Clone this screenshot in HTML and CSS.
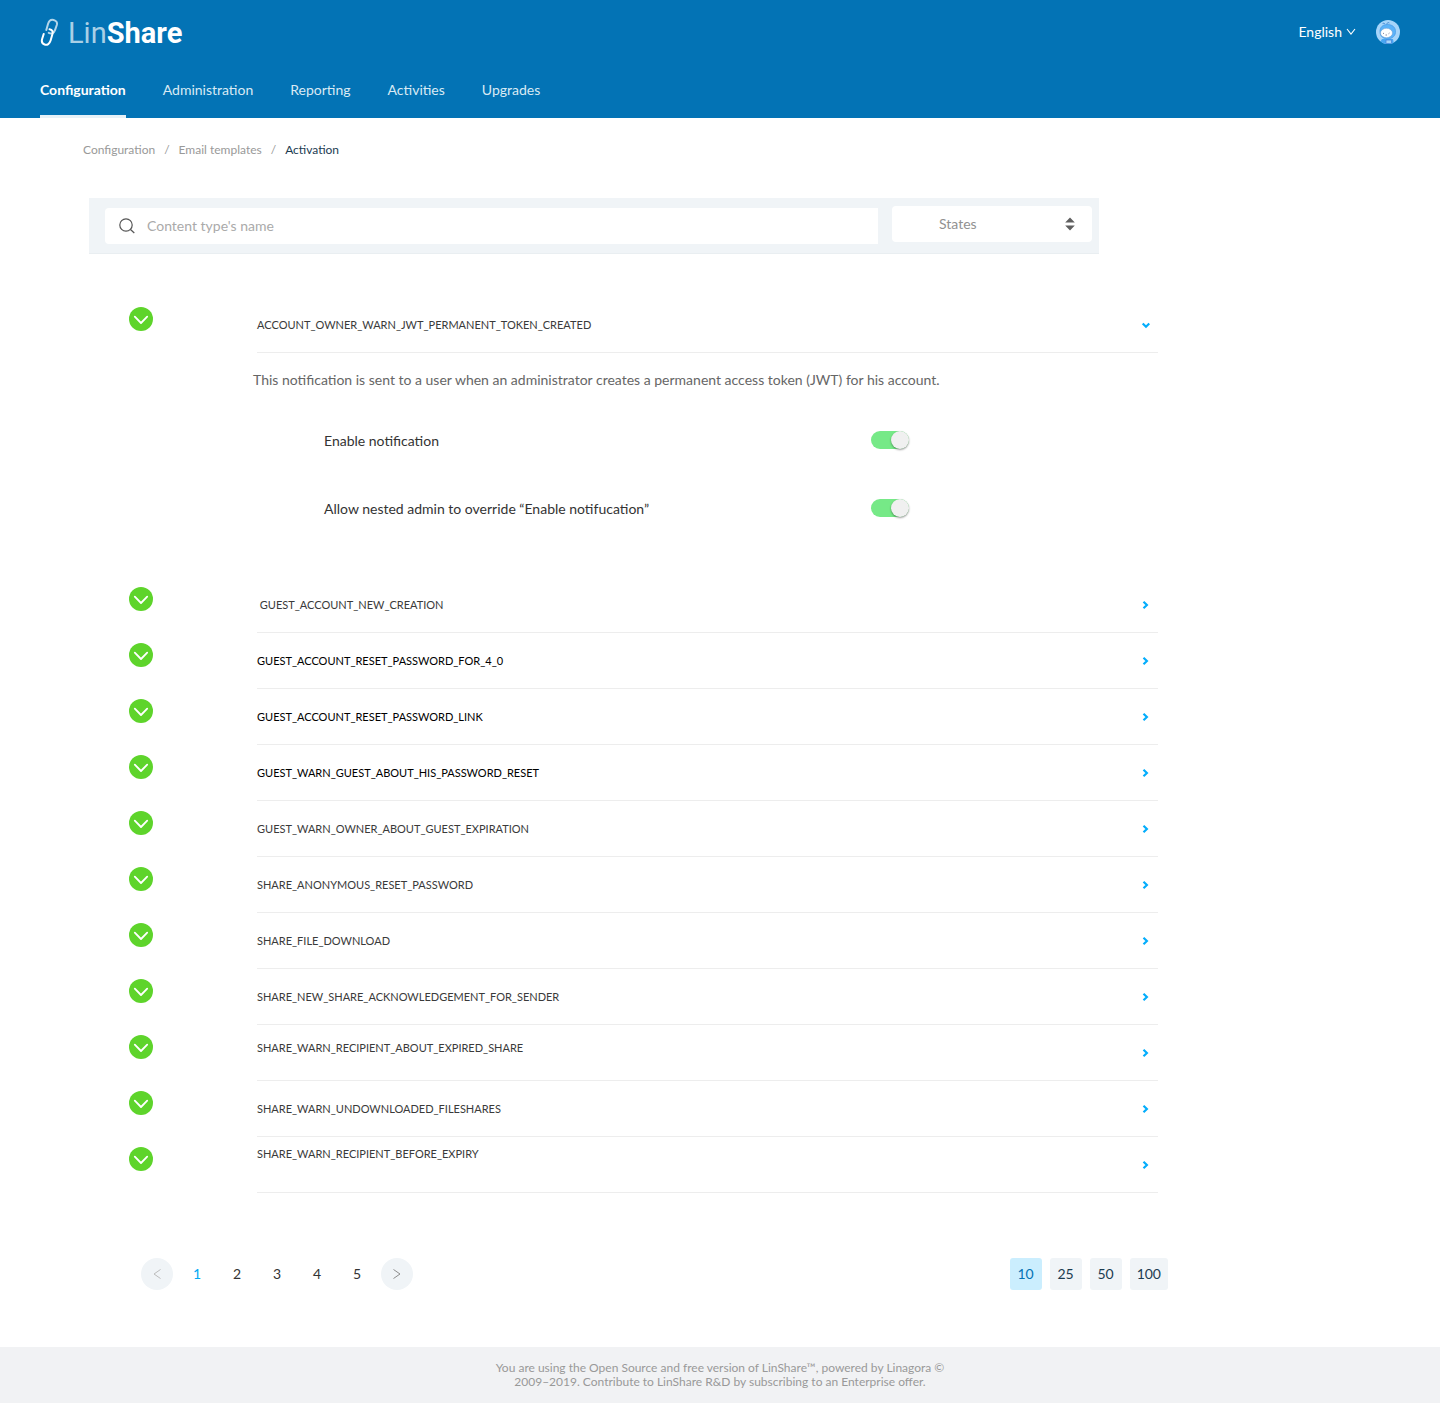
FILE: index.html
```html
<!DOCTYPE html>
<html lang="en">
<head>
<meta charset="utf-8">
<title>LinShare - Email templates activation</title>
<link rel="stylesheet" href="styles.css">
</head>
<body>
<svg class="sprite" aria-hidden="true">
  <symbol id="check" viewBox="0 0 24 24"><circle cx="12" cy="12" r="12" fill="#5ed42b"/><path d="M5.8 9.7l6.2 6.3 6.2-6.3" fill="none" stroke="#fff" stroke-width="1.8" stroke-linecap="round" stroke-linejoin="round"/></symbol>
  <symbol id="right" viewBox="0 0 10 10"><path d="M3.500 1.700L6.900 5 3.500 8.300" fill="none" stroke="#03adfc" stroke-width="2.200"/></symbol>
  <symbol id="down" viewBox="0 0 10 10"><path d="M2.700 3.500L6 6.800l3.300-3.300" fill="none" stroke="#03adfc" stroke-width="2.200"/></symbol>
</svg>
<header class="header">
  <div class="topbar">
    <a class="logo" href="#">
      <svg class="logo-mark" width="18" height="28" viewBox="0 0 18 28" fill="none" stroke-linecap="round" stroke-width="2"><path d="M6.300 12L8 6C9 2.800 11 1.400 13.600 2C16.300 2.700 17.500 4.500 16.800 7L15 12.200C14 15.200 11.500 16.300 8.800 14.800" stroke="#b4d6ea"/><path d="M9.500 11.200C12.500 11.600 13.200 13.800 12.400 16.300L10.600 22.500C9.600 25.800 7.300 27.400 4.600 26.500C2 25.600 1.400 23.300 2.200 20.700L3.700 16" stroke="#fff"/></svg>
      <span class="logo-text"><span class="logo-lin">Lin</span>Share</span>
    </a>
    <div class="account">
      <button class="language" type="button">English
        <svg width="10" height="8" viewBox="0 0 10 8"><path d="M1 1l4 5 4-5" fill="none" stroke="#fff" stroke-width="1.100"/></svg>
      </button>
      <button class="avatar" type="button" aria-label="Account">
        <svg width="24" height="24" viewBox="0 0 24 24"><defs><clipPath id="disc"><circle cx="12" cy="12" r="12"/></clipPath></defs><g clip-path="url(#disc)"><path d="M0 0h24v24H0z" fill="#a6d5fa"/><path d="M3 24l3-5h11l1 5z" fill="#48a6f3"/><path d="M4 12.500C3.500 7 7 4.500 11.500 4.500S20 7 19.500 12.500c-.3 4-4 6.500-8 6.500S4.300 16.500 4 12.500z" fill="#5cb3f8" stroke="#4a9be6" stroke-width=".7"/><path d="M6.500 4c.5-1 1.500-1 2.500 0M11 4.300c0-1.800 1-2 2.400-1.300" fill="none" stroke="#3c83cf" stroke-width=".9"/><ellipse cx="10.500" cy="13" rx="6" ry="4.700" fill="#fff" stroke="#6f9ad0" stroke-width=".5"/><path d="M7 13l1 .8M12.500 13.800l1-.8M9.500 15h1.500" stroke="#557" stroke-width=".7"/><path d="M10 20h5.500v3.500H10z" fill="#a6d5fa" stroke="#4a86dc" stroke-width=".8"/></g></svg>
      </button>
    </div>
  </div>
  <nav class="nav">
    <a class="active" href="#">Configuration</a>
    <a href="#">Administration</a>
    <a href="#">Reporting</a>
    <a href="#">Activities</a>
    <a href="#">Upgrades</a>
  </nav>
</header>
<main class="main">
  <nav class="breadcrumb" aria-label="Breadcrumb">
    <a href="#">Configuration</a><span>/</span><a href="#">Email templates</a><span>/</span><a class="current" href="#">Activation</a>
  </nav>
  <form class="filters">
    <label class="search">
      <svg width="16" height="16" viewBox="0 0 16 16" fill="none" stroke="#555" stroke-width="1.200"><circle cx="7" cy="7" r="6.200"/><path d="M11.500 11.500l3.800 3.500"/></svg>
      <input type="search" placeholder="Content type's name" aria-label="Content type's name">
    </label>
    <label class="states">
      <select aria-label="States"><option>States</option></select>
      <svg class="sort" width="10" height="14" viewBox="0 0 10 14" fill="#5f5f5f"><path d="M5 .500l4.800 5H.2zM5 13.500l4.800-5H.2z"/></svg>
    </label>
  </form>
  <ul class="templates">
    <li class="template">
      <svg class="status"><use href="#check"/></svg>
      <button class="row" type="button" aria-expanded="true"><span>ACCOUNT_OWNER_WARN_JWT_PERMANENT_TOKEN_CREATED</span><svg class="chevron"><use href="#down"/></svg></button>
      <div class="details">
        <p>This notification is sent to a user when an administrator creates a permanent access token (JWT) for his account.</p>
        <label class="option">Enable notification<input class="switch" type="checkbox" role="switch" checked></label>
        <label class="option">Allow nested admin to override “Enable notifucation”<input class="switch" type="checkbox" role="switch" checked></label>
      </div>
    </li>
    <li class="template"><svg class="status"><use href="#check"/></svg><button class="row" type="button"><span>&nbsp;GUEST_ACCOUNT_NEW_CREATION</span><svg class="chevron"><use href="#right"/></svg></button></li>
    <li class="template"><svg class="status"><use href="#check"/></svg><button class="row strong" type="button"><span>GUEST_ACCOUNT_RESET_PASSWORD_FOR_4_0</span><svg class="chevron"><use href="#right"/></svg></button></li>
    <li class="template"><svg class="status"><use href="#check"/></svg><button class="row strong" type="button"><span>GUEST_ACCOUNT_RESET_PASSWORD_LINK</span><svg class="chevron"><use href="#right"/></svg></button></li>
    <li class="template"><svg class="status"><use href="#check"/></svg><button class="row strong" type="button"><span>GUEST_WARN_GUEST_ABOUT_HIS_PASSWORD_RESET</span><svg class="chevron"><use href="#right"/></svg></button></li>
    <li class="template"><svg class="status"><use href="#check"/></svg><button class="row" type="button"><span>GUEST_WARN_OWNER_ABOUT_GUEST_EXPIRATION</span><svg class="chevron"><use href="#right"/></svg></button></li>
    <li class="template"><svg class="status"><use href="#check"/></svg><button class="row" type="button"><span>SHARE_ANONYMOUS_RESET_PASSWORD</span><svg class="chevron"><use href="#right"/></svg></button></li>
    <li class="template"><svg class="status"><use href="#check"/></svg><button class="row" type="button"><span>SHARE_FILE_DOWNLOAD</span><svg class="chevron"><use href="#right"/></svg></button></li>
    <li class="template"><svg class="status"><use href="#check"/></svg><button class="row" type="button"><span>SHARE_NEW_SHARE_ACKNOWLEDGEMENT_FOR_SENDER</span><svg class="chevron"><use href="#right"/></svg></button></li>
    <li class="template"><svg class="status"><use href="#check"/></svg><button class="row raised" type="button"><span>SHARE_WARN_RECIPIENT_ABOUT_EXPIRED_SHARE</span><svg class="chevron"><use href="#right"/></svg></button></li>
    <li class="template"><svg class="status"><use href="#check"/></svg><button class="row" type="button"><span>SHARE_WARN_UNDOWNLOADED_FILESHARES</span><svg class="chevron"><use href="#right"/></svg></button></li>
    <li class="template"><svg class="status"><use href="#check"/></svg><button class="row top" type="button"><span>SHARE_WARN_RECIPIENT_BEFORE_EXPIRY</span><svg class="chevron"><use href="#right"/></svg></button></li>
  </ul>
  <div class="paging">
    <nav class="pages" aria-label="Pages">
      <button class="step" type="button" aria-label="Previous page" disabled><svg width="8" height="10" viewBox="0 0 8 10"><path d="M7.500.500L1 5l6.500 4.500" fill="none" stroke="#bbb"/></svg></button>
      <button class="selected" type="button">1</button>
      <button type="button">2</button>
      <button type="button">3</button>
      <button type="button">4</button>
      <button type="button">5</button>
      <button class="step" type="button" aria-label="Next page"><svg width="8" height="10" viewBox="0 0 8 10"><path d="M.500.500L7 5 .500 9.500" fill="none" stroke="#8c8c8c"/></svg></button>
    </nav>
    <div class="sizes">
      <button class="selected" type="button">10</button>
      <button type="button">25</button>
      <button type="button">50</button>
      <button type="button">100</button>
    </div>
  </div>
</main>
<footer class="footer">
  <p>You are using the Open Source and free version of LinShare™, powered by Linagora © 2009–2019. Contribute to LinShare R&amp;D by subscribing to an Enterprise offer.</p>
</footer>
</body>
</html>
```
FILE: styles.css
```css
* { box-sizing: border-box; }
body { margin: 0; background: #fff; color: #333; font: 14px/20px Lato, "Open Sans", sans-serif; }
button, input, select { font: inherit; color: inherit; border: 0; padding: 0; background: none; }
button { cursor: pointer; }
a { color: inherit; text-decoration: none; }
p, ul { margin: 0; padding: 0; list-style: none; }
svg { display: block; flex: none; }
.sprite { position: absolute; width: 0; height: 0; }

.header { background: #0373b5; color: #fff; padding: 0 40px; }
.topbar { display: flex; justify-content: space-between; align-items: center; height: 64px; }
.logo { display: flex; align-items: center; gap: 10px; }
.logo-text { padding-top: 2px; font: 700 29px/32px Roboto, sans-serif; }
.logo-lin { font-weight: 400; color: #a9d0e6; }
.account, .language { display: flex; align-items: center; }
.account { gap: 20px; }
.language { gap: 4px; }
.nav { display: flex; gap: 37px; height: 54px; color: #d9eaf4; }
.nav a { padding: 16px 0 15px; border-bottom: 3px solid transparent; }
.nav .active { font-weight: 700; color: #fff; border-color: #e6f1f8; }

.main { max-width: 1168px; padding: 22px 0 57px 83px; }
.breadcrumb { display: flex; gap: 9px; color: #999; font-size: 12px; }
.breadcrumb .current { color: #1b3b51; }

.filters { display: flex; align-items: flex-end; gap: 14px; height: 56px; margin: 38px 69px 43px 6px; padding: 8px 7px 9px 16px; background: #f0f4f7; border-bottom: 1px solid #e9eef1; }
.search { display: flex; flex: 1; align-items: center; gap: 12px; height: 36px; padding-left: 14px; background: #fff; border-radius: 4px 0 0 4px; }
.search input { flex: 1; min-width: 0; outline: 0; }
.search input::placeholder { color: #aaa; opacity: 1; }
.states { position: relative; align-self: flex-start; width: 200px; }
.states select { display: block; width: 100%; height: 36px; padding-left: 47px; border-radius: 4px; background: #fff; color: #919191; appearance: none; }
.sort { position: absolute; right: 17px; top: 11px; pointer-events: none; }

.templates { padding: 0 10px 0 46px; }
.template { display: grid; grid-template-columns: 128px minmax(0, 1fr); }
.status { width: 24px; height: 24px; margin-top: 10px; }
.row { display: flex; align-items: stretch; justify-content: space-between; height: 56px; padding-right: 8px; border-bottom: 1px solid #ededed; font-size: 11px; line-height: 16px; text-align: left; color: #3a3a3a; }
.row span { align-self: center; }
.row.strong { color: #000; }
.row.raised span { padding-bottom: 10px; }
.row.top span { padding-bottom: 22px; }
.chevron { width: 10px; height: 10px; align-self: center; }
.details { grid-column: 2; height: 224px; padding-top: 17px; }
.details p { margin: 0 0 41px -4px; color: #666; }
.option { display: flex; justify-content: space-between; align-items: flex-start; margin: 0 249px 48px 67px; }
.switch { appearance: none; width: 38px; height: 18px; margin: 0; border-radius: 9px; background: #76e987; cursor: pointer; }
.switch::before { content: ""; display: block; width: 18px; height: 18px; margin-left: 20px; border-radius: 50%; background: #f0f0f0; box-shadow: 0 1px 2px #0006; }

.paging { display: flex; justify-content: space-between; margin: 65px 0 0 58px; }
.pages, .sizes { display: flex; gap: 8px; }
.pages button { display: flex; align-items: center; justify-content: center; width: 32px; height: 32px; border-radius: 50%; }
.pages .selected { color: #03a9f4; }
.pages .step { background: #f0f4f7; }
.sizes button { min-width: 32px; height: 32px; padding: 0 7px; border-radius: 3px; background: #f0f4f7; color: #1b3b51; }
.sizes .selected { background: #cbeefe; color: #0373b5; }

.footer { padding: 14px 0; background: #f1f2f4; color: #999; font-size: 12px; line-height: 14px; text-align: center; }
.footer p { max-width: 460px; margin: 0 auto; }
```
